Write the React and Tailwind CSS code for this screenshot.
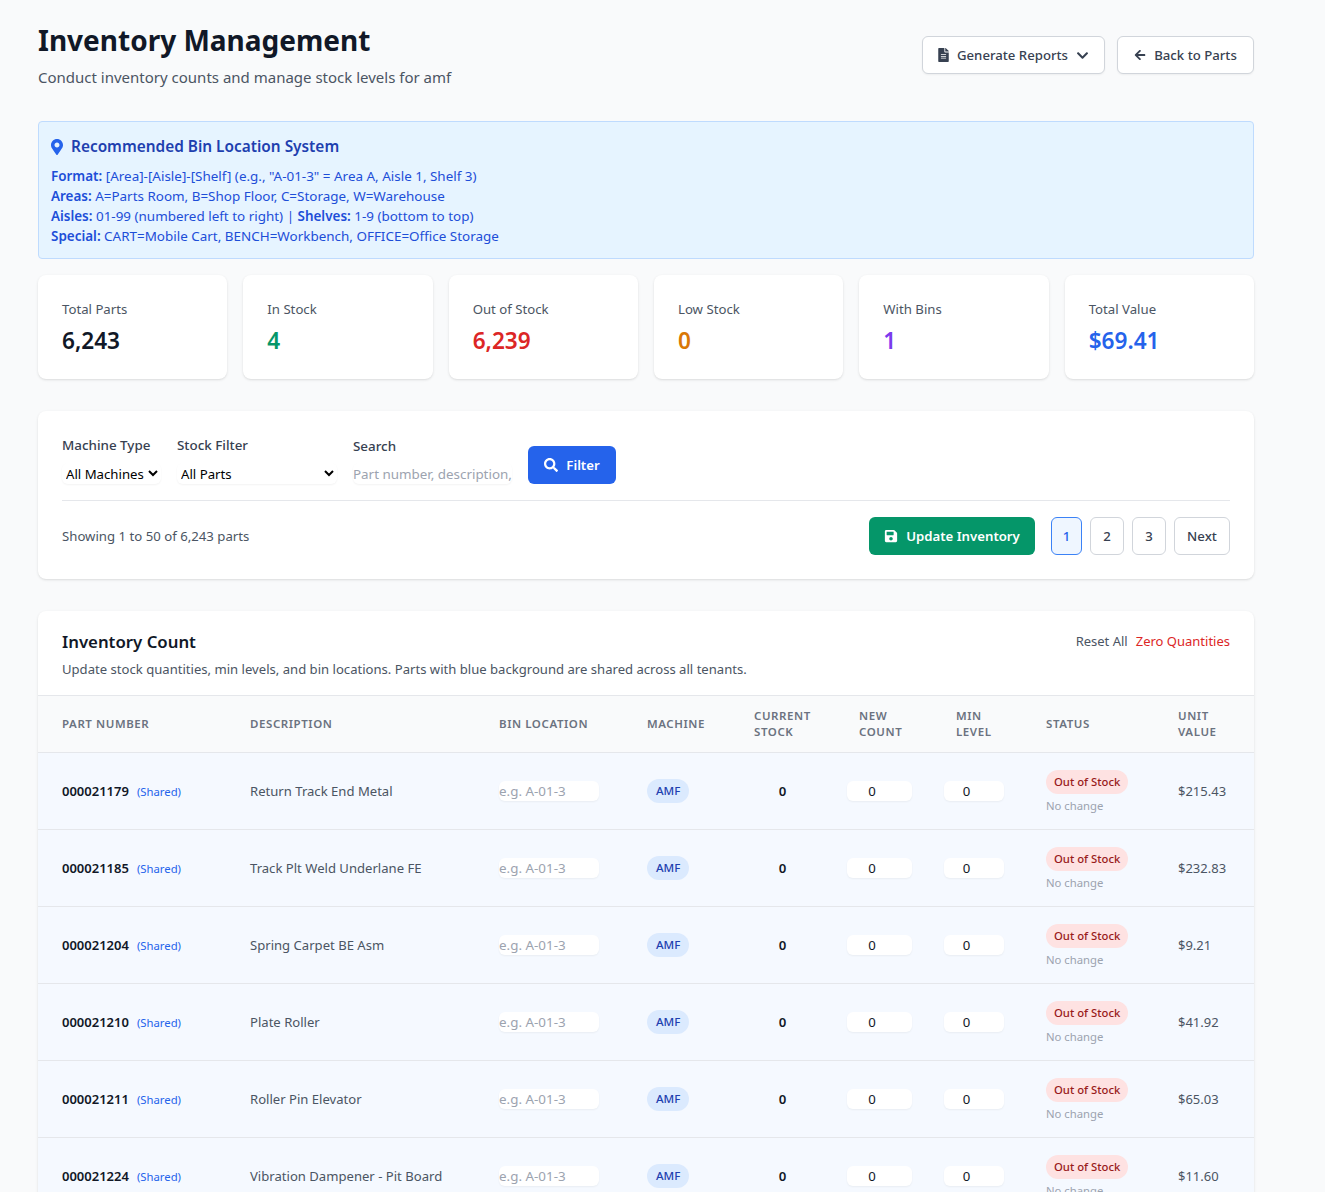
import { FaArrowLeft, FaChevronDown, FaFileAlt, FaMapMarkerAlt, FaSave, FaSearch } from "react-icons/fa";

const stats = [
  { label: "Total Parts", value: "6,243", color: "text-[#111827]" },
  { label: "In Stock", value: "4", color: "text-[#059669]" },
  { label: "Out of Stock", value: "6,239", color: "text-[#dc2626]" },
  { label: "Low Stock", value: "0", color: "text-[#d97706]" },
  { label: "With Bins", value: "1", color: "text-[#7c3aed]" },
  { label: "Total Value", value: "$69.41", color: "text-[#2563eb]" },
];

const parts = [
  { number: "000021179", description: "Return Track End Metal", value: "$215.43" },
  { number: "000021185", description: "Track Plt Weld Underlane FE", value: "$232.83" },
  { number: "000021204", description: "Spring Carpet BE Asm", value: "$9.21" },
  { number: "000021210", description: "Plate Roller", value: "$41.92" },
  { number: "000021211", description: "Roller Pin Elevator", value: "$65.03" },
  { number: "000021224", description: "Vibration Dampener - Pit Board", value: "$11.60" },
];

const Th = ({ children }) => (
  <th className="px-6 py-3 text-left text-[11.5px] leading-4 font-semibold uppercase tracking-[0.05em] text-[#6b7280]">
    {children}
  </th>
);

const PageButton = ({ children, active, width }) => (
  <button
    className={`h-[38px] rounded-md border pt-[2px] text-[13.2px] font-medium ${width} ${
      active ? "border-[#3b82f6] bg-[#eff6ff] text-[#2563eb]" : "border-[#d1d5db] bg-white text-[#374151]"
    }`}
  >
    {children}
  </button>
);

const App = () => {
  return (
    <div className="h-screen overflow-hidden bg-[#f9fafb] font-['Noto_Sans',sans-serif] text-[#111827]">
      <div className="ml-[38px] w-[1216px] pt-[22px]">
        <header className="flex items-start justify-between">
          <div>
            <h1 className="text-[28px] leading-9 font-bold text-[#111827]">Inventory Management</h1>
            <p className="mt-[7px] text-[15px] leading-6 text-[#4b5563]">Conduct inventory counts and manage stock levels for amf</p>
          </div>
          <div className="mt-[14px] flex gap-3">
            <button className="flex h-[38px] w-[183px] items-center justify-center gap-2 rounded-md border border-[#d1d5db] bg-white text-[13.2px] font-medium text-[#374151] shadow-[0_1px_2px_rgba(0,0,0,0.05)]">
              <FaFileAlt className="h-[14px] w-[11px]" />
              <span className="pt-px">Generate Reports</span>
              <FaChevronDown size={13} />
            </button>
            <button className="flex h-[38px] w-[137px] items-center justify-center gap-2 rounded-md border border-[#d1d5db] bg-white text-[13.2px] font-medium text-[#374151] shadow-[0_1px_2px_rgba(0,0,0,0.05)]">
              <FaArrowLeft size={12} />
              <span className="pt-px">Back to Parts</span>
            </button>
          </div>
        </header>

        <section className="mt-[32px] h-[138px] rounded border border-[#bfdbfe] bg-[#e6f4ff] px-3 pt-[13px]">
          <div className="flex items-center gap-2 text-[15.4px] leading-6 font-semibold text-[#1e40af]">
            <FaMapMarkerAlt className="h-4 w-3 text-[#2563eb]" />
            Recommended Bin Location System
          </div>
          <div className="mt-[7px] text-[13.45px] leading-5 text-[#1d4ed8]">
            <div><strong className="font-semibold">Format:</strong> [Area]-[Aisle]-[Shelf] (e.g., "A-01-3" = Area A, Aisle 1, Shelf 3)</div>
            <div><strong className="font-semibold">Areas:</strong> A=Parts Room, B=Shop Floor, C=Storage, W=Warehouse</div>
            <div><strong className="font-semibold">Aisles:</strong> 01-99 (numbered left to right) | <strong className="font-semibold">Shelves:</strong> 1-9 (bottom to top)</div>
            <div><strong className="font-semibold">Special:</strong> CART=Mobile Cart, BENCH=Workbench, OFFICE=Office Storage</div>
          </div>
        </section>

        <section className="mt-4 grid grid-cols-6 gap-4">
          {stats.map((stat) => (
            <div key={stat.label} className="h-[104px] rounded-lg bg-white p-6 shadow">
              <div className="text-[13.2px] leading-5 text-[#4b5563]">{stat.label}</div>
              <div className={`mt-[6px] text-[22.6px] leading-8 font-semibold ${stat.color}`}>{stat.value}</div>
            </div>
          ))}
        </section>

        <section className="mt-8 h-[168px] rounded-lg bg-white p-6 shadow">
          <div className="flex items-end gap-4">
            <label className="block">
              <span className="block text-[13.4px] leading-5 font-medium text-[#374151]">Machine Type</span>
              <select className="mt-[8px] block h-[21px] w-[99px] rounded-md bg-white text-[13.2px] text-black shadow-[0_1px_2px_rgba(0,0,0,0.05)]">
                <option>All Machines</option>
              </select>
            </label>
            <label className="block">
              <span className="block text-[13.4px] leading-5 font-medium text-[#374151]">Stock Filter</span>
              <select className="mt-[8px] block h-[21px] w-[160px] rounded-md bg-white text-[13.2px] text-black shadow-[0_1px_2px_rgba(0,0,0,0.05)]">
                <option>All Parts</option>
              </select>
            </label>
            <label className="block">
              <span className="block text-[13.4px] leading-5 font-medium text-[#374151]">Search</span>
              <input
                placeholder="Part number, description, etc."
                className="mt-[7px] block h-[21px] w-[159px] rounded-md bg-white text-[13.4px] shadow-[0_1px_2px_rgba(0,0,0,0.05)] placeholder:text-[#9ca3af]"
              />
            </label>
            <button className="flex h-[38px] w-[88px] items-center justify-center gap-2 rounded-md bg-[#2563eb] text-[13.2px] font-semibold text-white">
              <FaSearch size={14} />
              <span className="pt-px">Filter</span>
            </button>
          </div>
          <div className="mt-[16px] flex items-center justify-between border-t border-[#e5e7eb] pt-4">
            <div className="pt-px text-[13.2px] text-[#4b5563]">Showing 1 to 50 of 6,243 parts</div>
            <div className="flex items-center gap-2">
              <button className="mr-2 flex h-[38px] w-[166px] items-center justify-center gap-2 rounded-md bg-[#059669] text-[13.2px] font-semibold text-white">
                <FaSave size={14} />
                <span className="pt-px">Update Inventory</span>
              </button>
              <PageButton active width="w-[31px]">1</PageButton>
              <PageButton width="w-[34px]">2</PageButton>
              <PageButton width="w-[34px]">3</PageButton>
              <PageButton width="w-[56px]">Next</PageButton>
            </div>
          </div>
        </section>

        <section className="mt-8 rounded-lg bg-white shadow">
          <div className="h-[85px] border-b border-[#e5e7eb] px-6 pt-[17px]">
            <div className="flex items-center justify-between">
              <h2 className="text-[16.8px] leading-7 font-semibold text-[#111827]">Inventory Count</h2>
              <div className="flex gap-2 text-[13px]">
                <button className="text-[#4b5563]">Reset All</button>
                <button className="text-[#dc2626]">Zero Quantities</button>
              </div>
            </div>
            <p className="mt-[3px] text-[13.1px] leading-5 text-[#4b5563]">
              Update stock quantities, min levels, and bin locations. Parts with blue background are shared across all tenants.
            </p>
          </div>
          <table className="w-full table-fixed">
            <colgroup>
              <col className="w-[188px]" />
              <col className="w-[249px]" />
              <col className="w-[148px]" />
              <col className="w-[107px]" />
              <col className="w-[105px]" />
              <col className="w-[97px]" />
              <col className="w-[90px]" />
              <col className="w-[132px]" />
              <col className="w-[100px]" />
            </colgroup>
            <thead className="border-b border-[#e5e7eb] bg-[#f9fafb]">
              <tr>
                <Th>Part Number</Th>
                <Th>Description</Th>
                <Th>Bin Location</Th>
                <Th>Machine</Th>
                <Th>Current Stock</Th>
                <Th>New Count</Th>
                <Th>Min Level</Th>
                <Th>Status</Th>
                <Th>Unit Value</Th>
              </tr>
            </thead>
            <tbody>
              {parts.map((part) => (
                <tr key={part.number} className="h-[77px] border-b border-[#e5e7eb] bg-[#f5f9ff]">
                  <td className="pl-6 text-[13px] leading-5 whitespace-nowrap">
                    <span className="font-semibold text-[#111827]">{part.number}</span>
                    <span className="ml-2 text-[11.3px] text-[#2563eb]">(Shared)</span>
                  </td>
                  <td className="px-6 pt-[2px] text-[13.1px] text-[#4b5563]">{part.description}</td>
                  <td className="px-6">
                    <input placeholder="e.g. A-01-3" className="block h-5 w-[100px] rounded-md bg-white text-[13.4px] shadow-[0_1px_2px_rgba(0,0,0,0.05)] placeholder:text-[#9ca3af]" />
                  </td>
                  <td className="px-6">
                    <span className="block w-fit rounded-full bg-[#dbeafe] px-[9px] py-[2px] text-[11.6px] leading-5 font-medium text-[#1e40af]">AMF</span>
                  </td>
                  <td className="px-6 pt-[2px] text-center text-[13.2px] font-semibold text-[#111827]">0</td>
                  <td className="pl-3">
                    <input readOnly value="0" className="block h-5 w-[65px] rounded-md bg-white pr-[15px] text-center text-[13.2px] text-[#111827] shadow-[0_1px_2px_rgba(0,0,0,0.05)]" />
                  </td>
                  <td className="pl-3">
                    <input readOnly value="0" className="block h-5 w-[60px] rounded-md bg-white pr-[15px] text-center text-[13.2px] text-[#111827] shadow-[0_1px_2px_rgba(0,0,0,0.05)]" />
                  </td>
                  <td className="px-6 pt-px">
                    <span className="block w-fit rounded-full bg-[#fee2e2] px-2 py-[2px] text-[11.3px] leading-5 font-medium whitespace-nowrap text-[#991b1b]">Out of Stock</span>
                    <div className="mt-1 text-[11.3px] leading-4 text-[#9ca3af]">No change</div>
                  </td>
                  <td className="px-6 pt-[2px] text-[13px] text-[#4b5563]">{part.value}</td>
                </tr>
              ))}
            </tbody>
          </table>
        </section>
      </div>
    </div>
  );
};

export default App;
